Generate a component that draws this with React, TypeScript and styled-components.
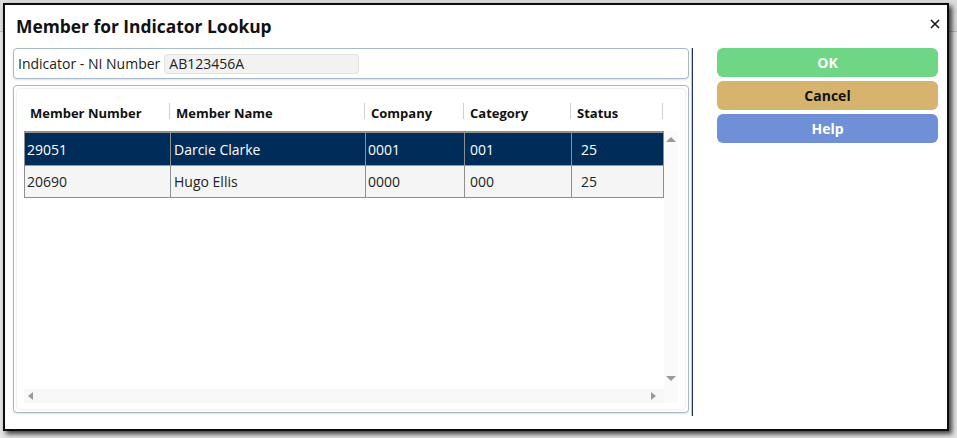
import styled, { createGlobalStyle } from "styled-components"

const GlobalStyle = createGlobalStyle`
    html, body {
        margin: 0;
        padding: 0;
        height: 100%;
    }
    body {
        background: linear-gradient(#dcdcdc 0, #dcdcdc 31px, #b9b9b9 31px, #b9b9b9 32px, #e4e4e4 32px);
        font-family: "Open Sans", "Noto Sans", sans-serif;
        overflow: hidden;
    }
`

const Dialog = styled.div`
    box-sizing: border-box;
    margin: 3px 0 0 3px;
    width: 946px;
    height: 428px;
    background: #fff;
    border: 2px solid #0d0d0d;
    box-shadow: 3px 3px 5px rgba(0, 0, 0, 0.75);
    display: flex;
    flex-direction: column;
`

const TitleBar = styled.div`
    height: 43px;
    display: flex;
    align-items: center;
    justify-content: space-between;
    padding: 0 6px 0 11px;
    h1 {
        margin: 0 0 2px;
        font-size: 17.4px;
        font-weight: 700;
        color: #111;
    }
`

const CloseBtn = styled.button`
    background: transparent;
    border: 0;
    padding: 0;
    width: 12px;
    height: 12px;
    display: flex;
    margin-top: -6px;
`

const Content = styled.div`
    flex: 1;
    display: flex;
    padding: 0 9px 16px 8px;
`

const LeftCol = styled.div`
    width: 676px;
    display: flex;
    flex-direction: column;
    gap: 6px;
`

const Splitter = styled.div`
    width: 2px;
    margin-left: 2px;
    background: linear-gradient(90deg, #b9c9dc 0 1px, #1e3556 1px 2px);
    margin-bottom: -3px;
`

const RightCol = styled.div`
    margin-left: 24px;
    width: 221px;
    display: flex;
    flex-direction: column;
    gap: 4px;
`

const Panel = styled.div<{ $grow?: boolean }>`
    box-sizing: border-box;
    border: 1px solid #a8b8cb;
    border-radius: 4px;
    background: #fff;
    box-shadow: 0 1px 2px rgba(120, 140, 170, 0.25);
    ${p => p.$grow ? "flex: 1; display: flex; padding: 3px;" : "height: 31px; display: flex; align-items: center; padding: 0 4px;"}
`

const Label = styled.span`
    font-size: 14px;
    color: #222;
    margin-right: 4px;
`

const TextBox = styled.div`
    box-sizing: border-box;
    width: 195px;
    height: 20px;
    background: #f2f2f2;
    border: 1px solid #e2e2e2;
    border-radius: 3px;
    font-size: 14px;
    color: #222;
    line-height: 18px;
    padding-left: 4px;
`

const GridInner = styled.div`
    flex: 1;
    border-radius: 3px;
    box-shadow: 0 0 2px rgba(0, 0, 0, 0.22);
    padding: 9px 5px 6px 7px;
    display: flex;
    flex-direction: column;
`

const cols = "146px 195px 99px 107px 92px"

const HeaderRow = styled.div`
    box-sizing: border-box;
    display: grid;
    grid-template-columns: ${cols};
    width: 639px;
    height: 33px;
    padding-bottom: 3px;
    align-items: center;
`

const HeadCell = styled.div<{ $pad?: number }>`
    position: relative;
    font-size: 13px;
    font-weight: 700;
    color: #111;
    padding-left: ${p => p.$pad ?? 5}px;
    height: 16px;
    line-height: 16px;
    &::after {
        content: "";
        position: absolute;
        right: 0;
        top: -2px;
        height: 16px;
        border-right: 1px solid #d0d0d0;
    }
`

const ScrollArea = styled.div`
    flex: 1;
    display: grid;
    grid-template-columns: 640px 14px;
    grid-template-rows: 1fr 14px;
`

const Rows = styled.div`
    align-self: start;
    border: 1px solid #8f8f8f;
    border-top-width: 2px;
    border-right: 0;
`

const Row = styled.div<{ $selected?: boolean }>`
    display: grid;
    grid-template-columns: ${cols};
    height: 32px;
    background: ${p => p.$selected ? "#002c5a" : "#f5f5f5"};
    color: ${p => p.$selected ? "#fff" : "#222"};
    & + & {
        border-top: 1px solid #9a9a9a;
        height: 31px;
    }
`

const Cell = styled.div<{ $pad?: number }>`
    font-size: 14px;
    padding-left: ${p => p.$pad ?? 2}px;
    display: flex;
    align-items: center;
    border-right: 1px solid #8f8f8f;
`

const VScroll = styled.div`
    background: #fafafa;
    display: flex;
    flex-direction: column;
    justify-content: space-between;
    align-items: center;
    padding: 6px 0 8px;
`

const HScroll = styled.div`
    background: #f8f8f8;
    display: flex;
    justify-content: space-between;
    align-items: center;
    padding: 0 8px 0 4px;
`

const Arrow = styled.span<{ $dir: "up" | "down" | "left" | "right" }>`
    width: 0;
    height: 0;
    border: 4px solid transparent;
    ${p => p.$dir === "up" && "border-bottom: 5px solid #999; border-top: 0; border-left-width: 5px; border-right-width: 5px;"}
    ${p => p.$dir === "down" && "border-top: 5px solid #999; border-bottom: 0; border-left-width: 5px; border-right-width: 5px;"}
    ${p => p.$dir === "left" && "border-right: 5px solid #999; border-left: 0;"}
    ${p => p.$dir === "right" && "border-left: 5px solid #999; border-right: 0;"}
`

const Corner = styled.div`
    background: #fafafa;
`

const Button = styled.button<{ $bg: string; $fg: string }>`
    height: 29px;
    border: 0;
    border-radius: 6px;
    background: ${p => p.$bg};
    color: ${p => p.$fg};
    font-family: "Open Sans", "Noto Sans", sans-serif;
    font-size: 14px;
    font-weight: 700;
    cursor: pointer;
`

const members = [
    { num: "29051", name: "Darcie Clarke", company: "0001", category: "001", status: "25" },
    { num: "20690", name: "Hugo Ellis", company: "0000", category: "000", status: "25" },
]

export default function App() {
    return (
        <>
            <GlobalStyle />
            <Dialog>
                <TitleBar>
                    <h1>Member for Indicator Lookup</h1>
                    <CloseBtn>
                        <svg width="12" height="12" viewBox="0 0 12 12">
                            <path d="M2 2L10 10M10 2L2 10" stroke="#111" strokeWidth="1.5" />
                        </svg>
                    </CloseBtn>
                </TitleBar>
                <Content>
                    <LeftCol>
                        <Panel>
                            <Label>Indicator - NI Number</Label>
                            <TextBox>AB123456A</TextBox>
                        </Panel>
                        <Panel $grow>
                            <GridInner>
                                <HeaderRow>
                                    <HeadCell $pad={6}>Member Number</HeadCell>
                                    <HeadCell $pad={6}>Member Name</HeadCell>
                                    <HeadCell $pad={6}>Company</HeadCell>
                                    <HeadCell $pad={6}>Category</HeadCell>
                                    <HeadCell $pad={6}>Status</HeadCell>
                                </HeaderRow>
                                <ScrollArea>
                                    <Rows>
                                        {members.map((m, i) => (
                                            <Row key={m.num} $selected={i === 0}>
                                                <Cell>{m.num}</Cell>
                                                <Cell $pad={3}>{m.name}</Cell>
                                                <Cell>{m.company}</Cell>
                                                <Cell $pad={5}>{m.category}</Cell>
                                                <Cell $pad={9}>{m.status}</Cell>
                                            </Row>
                                        ))}
                                    </Rows>
                                    <VScroll>
                                        <Arrow $dir="up" />
                                        <Arrow $dir="down" />
                                    </VScroll>
                                    <HScroll>
                                        <Arrow $dir="left" />
                                        <Arrow $dir="right" />
                                    </HScroll>
                                    <Corner />
                                </ScrollArea>
                            </GridInner>
                        </Panel>
                    </LeftCol>
                    <Splitter />
                    <RightCol>
                        <Button $bg="#6fd685" $fg="#fff">OK</Button>
                        <Button $bg="#d6b46e" $fg="#111">Cancel</Button>
                        <Button $bg="#6f90d6" $fg="#fff">Help</Button>
                    </RightCol>
                </Content>
            </Dialog>
        </>
    )
}
